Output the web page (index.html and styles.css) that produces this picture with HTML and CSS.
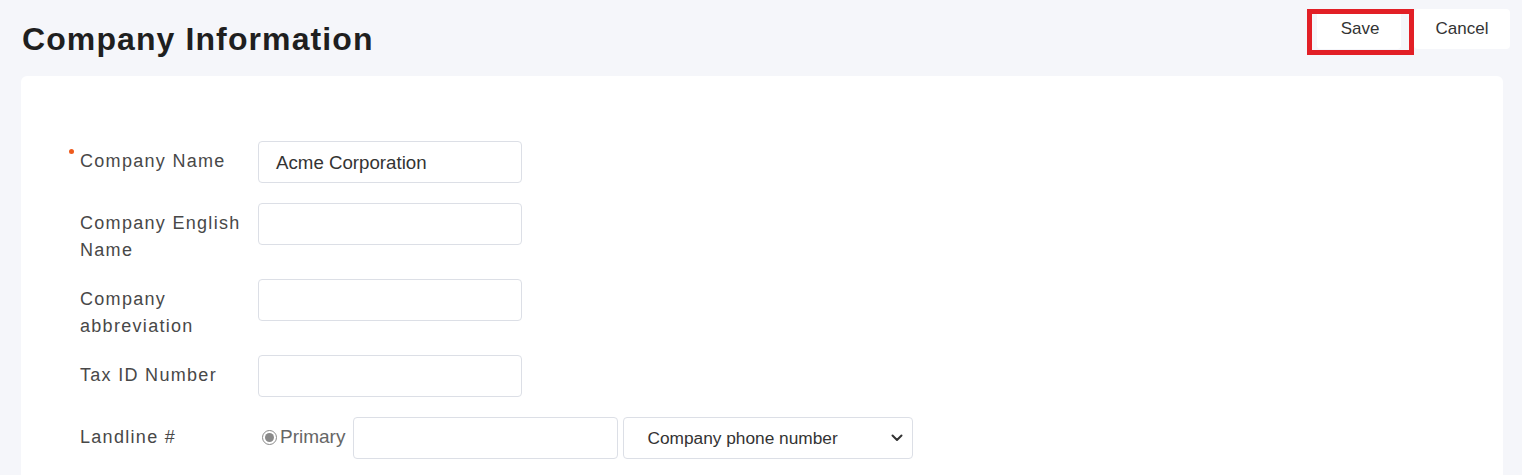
FILE: index.html
```html
<!DOCTYPE html>
<html lang="en">
<head>
<meta charset="utf-8">
<title>Company Information</title>
<link rel="stylesheet" href="styles.css">
</head>
<body>
<div class="page">
  <header class="header">
    <h1 class="title">Company Information</h1>
    <div class="actions">
      <div class="save-wrap">
        <button class="btn btn-save" type="button">Save</button>
        <span class="highlight"></span>
      </div>
      <button class="btn btn-cancel" type="button">Cancel</button>
    </div>
  </header>
  <main class="card">
    <div class="row">
      <label class="label required">Company Name</label>
      <div class="input">Acme Corporation</div>
    </div>
    <div class="row">
      <label class="label">Company English Name</label>
      <div class="input"></div>
    </div>
    <div class="row">
      <label class="label">Company abbreviation</label>
      <div class="input"></div>
    </div>
    <div class="row">
      <label class="label">Tax ID Number</label>
      <div class="input"></div>
    </div>
    <div class="row">
      <label class="label">Landline #</label>
      <div class="phone">
        <span class="radio-opt"><span class="radio"><span class="radio-dot"></span></span><span class="radio-text">Primary</span></span>
        <div class="input input-phone"></div>
        <div class="select">
          <span class="select-text">Company phone number</span>
          <svg class="chevron" width="12" height="8" viewBox="0 0 12 8"><path d="M1.5 1.5 L6 6 L10.5 1.5" fill="none" stroke="#333" stroke-width="2" stroke-linecap="round" stroke-linejoin="round"/></svg>
        </div>
      </div>
    </div>
  </main>
</div>
</body>
</html>
```

FILE: styles.css
```css
* { box-sizing: border-box; }
html, body { margin: 0; padding: 0; }
body {
  background: #f5f6fa;
  font-family: "Liberation Sans", Arial, sans-serif;
  color: #333;
  height: 475px;
  overflow: hidden;
}
.page {
  padding: 0 12px 0 21px;
}
.header {
  display: flex;
  justify-content: space-between;
  align-items: flex-start;
  height: 76px;
}
.title {
  margin: 19px 0 0 1px;
  font-size: 32px;
  line-height: 40px;
  font-weight: 700;
  letter-spacing: 1.1px;
  color: #1f1f1f;
}
.actions {
  display: flex;
  gap: 13px;
  margin-top: 9px;
}
.save-wrap {
  position: relative;
}
.btn {
  height: 40px;
  border: none;
  background: #fff;
  border-radius: 4px;
  font-family: "Liberation Sans", Arial, sans-serif;
  font-size: 17px;
  color: #333;
  padding: 0;
  cursor: pointer;
}
.btn-save { width: 84px; padding-left: 2px; }
.btn-cancel { width: 96px; }
.highlight {
  position: absolute;
  left: -10px;
  top: 0;
  width: 107px;
  height: 46px;
  border: 5px solid #e21f26;
  pointer-events: none;
}
.card {
  background: #fff;
  border-radius: 6px;
  margin-right: 7px;
  padding: 65px 20px 40px 59px;
}
.row {
  display: flex;
  align-items: flex-start;
  margin-bottom: 20px;
}
.label {
  position: relative;
  width: 178px;
  padding: 7px 12px 0 0;
  margin-bottom: -5px;
  font-size: 18px;
  line-height: 27px;
  letter-spacing: 1.3px;
  color: #484848;
}
.required::before {
  content: "";
  position: absolute;
  left: -11px;
  top: 8px;
  width: 5px;
  height: 5px;
  border-radius: 50%;
  background: #ee5a1c;
}
.input {
  width: 264px;
  height: 42px;
  border: 1px solid #dcdfe6;
  border-radius: 4px;
  background: #fff;
  padding: 0 17px;
  font-size: 18.7px;
  line-height: 41px;
  color: #333;
}
.phone {
  display: flex;
  align-items: center;
  gap: 5px;
}
.radio-opt {
  display: flex;
  align-items: center;
  gap: 3px;
  margin-left: 4px;
  margin-right: 3px;
  margin-top: -2px;
}
.radio {
  width: 15px;
  height: 15px;
  border: 1.5px solid #8a8a8a;
  border-radius: 50%;
  display: flex;
  align-items: center;
  justify-content: center;
}
.radio-dot {
  width: 9px;
  height: 9px;
  border-radius: 50%;
  background: #8a8a8a;
}
.radio-text {
  font-size: 19px;
  color: #666;
  letter-spacing: 0;
}
.input-phone {
  width: 265px;
}
.select {
  width: 290px;
  height: 42px;
  border: 1px solid #dcdfe6;
  border-radius: 4px;
  background: #fff;
  display: flex;
  align-items: center;
  justify-content: space-between;
  padding: 0 9px 0 23px;
}
.select-text {
  font-size: 17.3px;
  color: #333;
}
.chevron { display: block; }
```
